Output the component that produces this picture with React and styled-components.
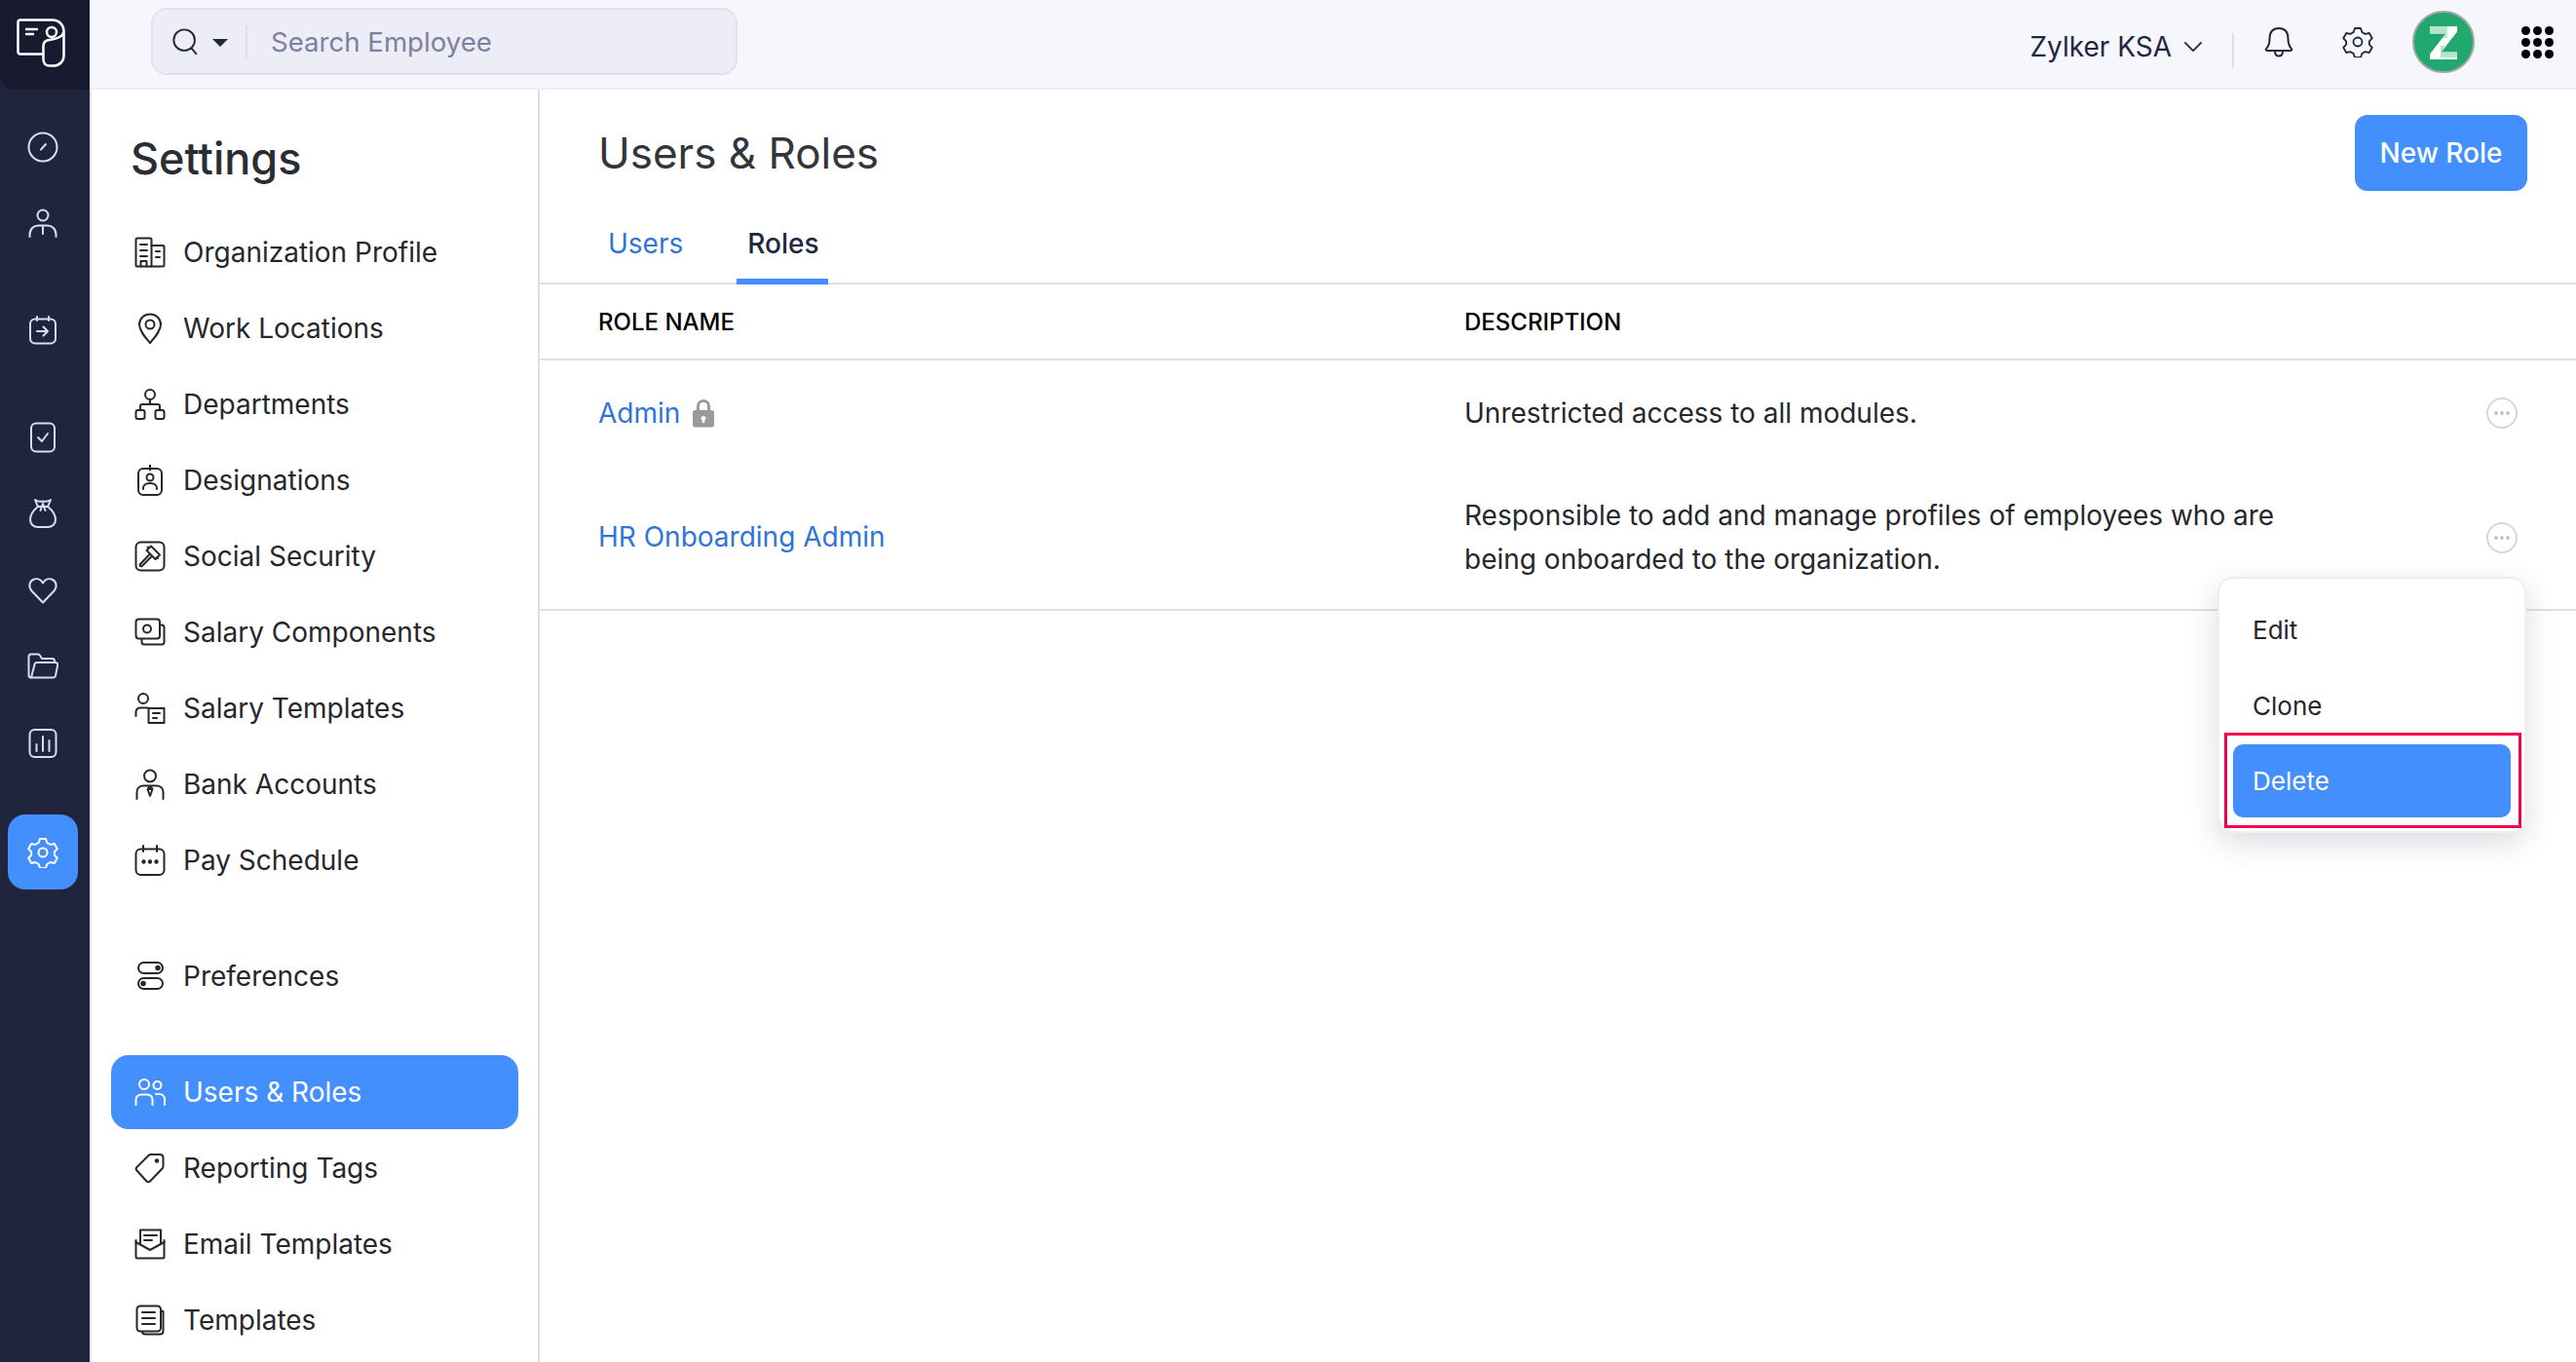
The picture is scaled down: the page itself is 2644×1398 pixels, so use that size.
import React from "react";
import styled, { createGlobalStyle } from "styled-components";

const GlobalStyle = createGlobalStyle`
  html, body {
    margin: 0;
    height: 100%;
    overflow: hidden;
    background: #fff;
  }
  body {
    font-family: Inter, "Liberation Sans", sans-serif;
    font-size: 28px;
    color: #25272d;
  }
`;

const Shell = styled.div`
  display: flex;
  height: 1398px;
  overflow: hidden;
`;

const Rail = styled.nav`
  width: 92px;
  flex: none;
  background: #20253e;
  border-right: 2px solid #e3e3e6;
  display: flex;
  flex-direction: column;
`;

const LogoBlock = styled.div`
  height: 92px;
  background: #181b30;
  border-bottom-left-radius: 14px;
  color: #fff;
  display: flex;
  align-items: center;
  justify-content: center;
  padding: 0 8px 4px 0;
  box-sizing: border-box;
`;

const RailGroups = styled.div`
  padding-top: 20px;
  display: flex;
  flex-direction: column;
  gap: 31px;
`;

const RailGroup = styled.div`
  display: flex;
  flex-direction: column;
`;

const RailItem = styled.div`
  height: ${(p) => (p.$active ? 77 : 78.5)}px;
  width: 72px;
  margin-left: 8px;
  margin-top: ${(p) => (p.$active ? 3 : 0)}px;
  display: flex;
  align-items: center;
  justify-content: center;
  color: #d5def4;
  border-radius: 18px;
  background: ${(p) => (p.$active ? "#438ffe" : "transparent")};
  ${(p) => p.$active && "color: #fff;"}
`;

const Column = styled.div`
  flex: 1;
  min-width: 0;
  display: flex;
  flex-direction: column;
`;

const TopBar = styled.header`
  height: 92px;
  flex: none;
  box-sizing: border-box;
  background: #f6f7fd;
  border-bottom: 2px solid #eeeff2;
  margin-left: -2px;
  display: flex;
  align-items: flex-start;
  padding: 8px 24px 0 63px;
`;

const SearchBox = styled.div`
  width: 602px;
  height: 69px;
  box-sizing: border-box;
  background: #ecedf6;
  border: 2px solid #e0e2ef;
  border-radius: 16px;
  display: flex;
  align-items: center;
  padding-left: 19px;
  color: #23263f;
`;

const Caret = styled.span`
  width: 0;
  height: 0;
  margin-left: 12px;
  border-left: 8px solid transparent;
  border-right: 8px solid transparent;
  border-top: 8px solid #23263f;
  margin-top: 3px;
`;

const SearchDivider = styled.span`
  width: 2px;
  height: 34px;
  background: #dcdeea;
  margin: 0 24px 0 18px;
`;

const Placeholder = styled.span`
  color: #7d80a0;
  font-size: 27.6px;
`;

const TopRight = styled.div`
  margin-left: auto;
  display: flex;
  align-items: center;
  height: 70px;
`;

const Company = styled.div`
  display: flex;
  align-items: center;
  gap: 9px;
  color: #23263f;
  font-size: 28px;
  margin-top: 10px;
`;

const TopDivider = styled.span`
  width: 2px;
  height: 36px;
  background: #dcdde5;
  margin: 0 30px 0 27px;
  margin-top: 18px;
`;

const TopIcon = styled.span`
  display: flex;
  color: #23263f;
  margin-left: ${(p) => p.$left || 0}px;
`;

const Avatar = styled.div`
  width: 64px;
  height: 64px;
  margin-left: 40px;
  box-sizing: border-box;
  border-radius: 50%;
  background: #21a86e;
  border: 2px solid #a3a6a6;
  display: flex;
  align-items: center;
  justify-content: center;
`;

const AvatarLetter = styled.span`
  font-size: 47px;
  font-weight: 900;
  line-height: 1;
  color: transparent;
  background:
    linear-gradient(to right, #b5e6cb 62%, #fff 62%) 0 22% / 100% 26% no-repeat,
    linear-gradient(to right, #fff 40%, #b5e6cb 40%) 0 78% / 100% 26% no-repeat,
    #fff;
  -webkit-background-clip: text;
  background-clip: text;
`;

const AppGrid = styled.div`
  display: grid;
  grid-template-columns: repeat(3, 8px);
  grid-auto-rows: 8px;
  gap: 4px;
  margin-left: 48px;
`;

const AppDot = styled.span`
  width: 9px;
  height: 9px;
  border-radius: 50%;
  background: #000;
`;

const Body = styled.div`
  flex: 1;
  min-height: 0;
  display: flex;
`;

const SettingsPanel = styled.aside`
  width: 460px;
  flex: none;
  box-sizing: border-box;
  border-right: 2px solid #dfdfe2;
  padding: 0 20px;
  overflow: hidden;
`;

const PanelTitle = styled.h2`
  margin: 43px 0 31px 20px;
  height: 55px;
  font-size: 45px;
  line-height: 55px;
  font-weight: 500;
  color: #2b2d33;
`;

const MenuGroup = styled.div`
  margin-bottom: ${(p) => p.$after || 0}px;
`;

const MenuRow = styled.div`
  height: 76px;
  margin-bottom: 2px;
  box-sizing: border-box;
  padding-left: 24px;
  display: flex;
  align-items: center;
  gap: 18px;
  border-radius: 18px;
  font-size: 28px;
  color: ${(p) => (p.$active ? "#fff" : "#25272d")};
  background: ${(p) => (p.$active ? "#438ffe" : "transparent")};
`;

const Main = styled.main`
  flex: 1;
  min-width: 0;
  position: relative;
`;

const PageHead = styled.div`
  height: 104px;
  box-sizing: border-box;
  padding: 26px 50px 0 60px;
  display: flex;
  align-items: flex-start;
  justify-content: space-between;
`;

const PageTitle = styled.h1`
  margin: 0;
  font-size: 44px;
  line-height: 78px;
  font-weight: 400;
  color: #33353a;
`;

const PrimaryButton = styled.button`
  width: 177px;
  height: 78px;
  border: 0;
  border-radius: 13px;
  background: #438ffe;
  color: #fff;
  font-family: inherit;
  font-size: 28px;
  font-weight: 500;
`;

const Tabs = styled.div`
  height: 96px;
  box-sizing: border-box;
  border-bottom: 2px solid #dfdfe2;
  padding-left: 59px;
  display: flex;
  gap: 44px;
`;

const Tab = styled.div`
  padding: 32px ${(p) => (p.$active ? 9 : 11)}px 0 11px;
  line-height: 44px;
  margin-bottom: -2px;
  font-weight: ${(p) => (p.$active ? 500 : 400)};
  color: ${(p) => (p.$active ? "#23263f" : "#2f74d8")};
  border-bottom: 6px solid ${(p) => (p.$active ? "#438ffe" : "transparent")};
`;

const TableHead = styled.div`
  height: 78px;
  box-sizing: border-box;
  border-bottom: 2px solid #dfdfe2;
  padding-left: 60px;
  display: grid;
  grid-template-columns: 889px 1fr;
  align-items: center;
  font-size: 24px;
  font-weight: 500;
  color: #000;
`;

const TableRow = styled.div`
  box-sizing: border-box;
  padding: ${(p) => p.$pad}px 50px ${(p) => p.$pad}px 60px;
  display: grid;
  grid-template-columns: 889px 1fr 42px;
  align-items: center;
  line-height: 45px;
  ${(p) => p.$last && "border-bottom: 2px solid #dfdfe2;"}
`;

const RoleName = styled.div`
  display: flex;
  align-items: center;
  gap: 12px;
  color: #2f74d8;
`;

const LockIcon = styled.svg`
  width: 24px;
  height: 30px;
  color: #9a9a9c;
`;

const Description = styled.div`
  max-width: 860px;
  color: #25272d;
`;

const MoreButton = styled.div`
  width: 32px;
  height: 32px;
  box-sizing: border-box;
  border: 2px solid #d6d6d8;
  border-radius: 50%;
  display: flex;
  align-items: center;
  justify-content: center;
  gap: 2px;
`;

const MoreDot = styled.span`
  width: 4px;
  height: 4px;
  border-radius: 50%;
  background: #c4c4c6;
`;

const Dropdown = styled.div`
  position: absolute;
  top: 500px;
  right: 51px;
  width: 317px;
  height: 263px;
  box-sizing: border-box;
  background: #fff;
  border: 2px solid #eeeef5;
  border-radius: 16px;
  box-shadow: 0 10px 30px rgba(30, 35, 60, 0.16);
  padding: 14px 14px 0;
`;

const DropdownItem = styled.div`
  height: ${(p) => p.$height}px;
  box-sizing: border-box;
  border-radius: 10px;
  padding-left: 20px;
  display: flex;
  align-items: center;
  font-size: 26px;
  color: ${(p) => (p.$active ? "#fff" : "#25272d")};
  background: ${(p) => (p.$active ? "#438ffe" : "transparent")};
`;

const Highlight = styled.div`
  position: absolute;
  left: 5px;
  right: 3px;
  top: 158px;
  height: 98px;
  box-sizing: border-box;
  border: 3px solid #f5004f;
`;

const Glyph = styled.svg`
  width: ${(p) => p.$size || 32}px;
  height: ${(p) => p.$size || 32}px;
  flex: none;
  fill: none;
  stroke: currentColor;
  stroke-width: ${(p) => p.$stroke || 2};
  stroke-linecap: round;
  stroke-linejoin: round;
`;

const Icon = ({ size, stroke, children, box = 32 }) => (
  <Glyph $size={size} $stroke={stroke} viewBox={`0 0 ${box} ${box}`}>
    {children}
  </Glyph>
);

// left rail
const railIcons = {
  clock: (
    <>
      <circle cx="16" cy="16" r="14.5" />
      <path d="M14 18.5 19 13" />
    </>
  ),
  person: (
    <>
      <circle cx="16" cy="7" r="5.5" />
      <path d="M2.5 29v-2c0-6 4-9.5 9-9.5h9c5 0 9 3.5 9 9.5v2M16 18v8" />
    </>
  ),
  checkin: (
    <>
      <rect x="3" y="4.5" width="26" height="25" rx="5" />
      <path d="M10 2v4M22 2v4M10 17h11M16.500 12.500l4.500 4.500-4.500 4.500" />
    </>
  ),
  task: (
    <>
      <rect x="4" y="1.500" width="24" height="29" rx="5" />
      <path d="M11 16l4 4 6-8" />
    </>
  ),
  bag: (
    <>
      <path d="M11 9C6 13 3 18 3 22.500 3 27 6.500 30 11 30h10c4.500 0 8-3 8-7.500C29 18 26 13 21 9" />
      <path d="M8 2c3 2 5 2 8 1.500 3 .5 5 .5 8-1.500-1 2.500-2 5-3 7H11C10 7 9 4.500 8 2zM16 6l-2.500 7M16 6l2.500 7" />
    </>
  ),
  heart: <path d="M16 28.500 4.500 16.500C1 12.500 2 7 6 5c3.500-1.700 7.500-.7 10 3.500C18.500 4.300 22.500 3.300 26 5c4 2 5 7.500 1.500 11.500z" />,
  folder: (
    <>
      <path d="M4 27.500C2.500 27.500 1.500 26.500 1.500 25V6C1.500 4.500 2.500 3.500 4 3.500h6.500c1 0 2 .5 2.500 1.300L15 8h10.500c1.500 0 2.500 1 2.500 2.500V12" />
      <path d="M4 27.500 7.500 14c.3-1.200 1.300-2 2.500-2h19c1.500 0 2.500 1.200 2.200 2.700L29 25.500c-.3 1.200-1.300 2-2.500 2z" />
    </>
  ),
  chart: (
    <>
      <rect x="2.500" y="2" width="27" height="28" rx="5" />
      <path d="M9.500 24v-7M16 24V9M22.500 24v-11" />
    </>
  ),
  gear: (
    <>
      <path d="M13 2h6l1.300 4 3.300 1.900 4.200-.9 3 5.200-2.900 3.100v3.400l2.900 3.100-3 5.200-4.200-.9-3.300 1.900-1.300 4h-6l-1.300-4-3.300-1.900-4.200.9-3-5.200 2.900-3.100v-3.400L1.200 12.200l3-5.200 4.200.9L11.700 6z" />
      <circle cx="16" cy="16" r="4.500" />
    </>
  )
};

// settings menu
const menuIcons = {
  org: (
    <>
      <path d="M3 1.500h13c1 0 1.500.5 1.500 1.500v27.500H3c-1 0-1.500-.5-1.500-1.500V3c0-1 .5-1.500 1.500-1.500z" />
      <path d="M17.500 9H29c1 0 1.500.5 1.500 1.500V29c0 1-.5 1.500-1.500 1.500H17.500" />
      <path d="M6 8h7M6 14h7M6 20h7M22 15h4M22 21h4M6.500 30.500V25h6v5.500" />
    </>
  ),
  pin: (
    <>
      <path d="M16 31C11 25 5 18.500 5 12 5 6 10 1.500 16 1.500S27 6 27 12c0 6.500-6 13-11 19z" />
      <circle cx="16" cy="12" r="4.500" />
    </>
  ),
  dept: (
    <>
      <circle cx="16" cy="6" r="5" />
      <path d="M16 11v5M6 22v-4c0-1.200.8-2 2-2h16c1.200 0 2 .8 2 2v4" />
      <rect x="1.500" y="22" width="9" height="9" rx="2" />
      <rect x="21.500" y="22" width="9" height="9" rx="2" />
    </>
  ),
  badge: (
    <>
      <rect x="4" y="4" width="24" height="27" rx="5" />
      <path d="M16 .5v5" />
      <circle cx="16" cy="13" r="3.500" />
      <path d="M9 25v-1c0-3 3-5 7-5s7 2 7 5v1" />
    </>
  ),
  gavel: (
    <>
      <rect x="1.500" y="1.500" width="29" height="29" rx="5" />
      <path d="M12.500 10 17 5.500l9 9-4.500 4.500zM14.500 7.500l-1-1M23 17l1 1M15 14.500 6 24c-.7.8-.7 1.500 0 2s1.300.5 2-.2l9-9" />
    </>
  ),
  money: (
    <>
      <path d="M26 8.500h2c1.500 0 2.500 1 2.500 2.500v15c0 1.500-1 2.500-2.500 2.500H10c-1.500 0-2.500-1-2.500-2.500v-3" />
      <rect x="1.500" y="2.500" width="24.500" height="20" rx="3" fill="#fff" />
      <circle cx="13" cy="12.500" r="4" />
    </>
  ),
  template: (
    <>
      <circle cx="9" cy="6" r="5" />
      <path d="M1.500 24v-4c0-3 2-4.500 5-4.500h7" />
      <rect x="14.500" y="16" width="16" height="15" />
      <path d="M19 21h7M19 26h4" />
    </>
  ),
  bank: (
    <>
      <circle cx="16" cy="7.500" r="6" />
      <path d="M2.500 31v-7c0-4 3-6.500 7-6.500h13c4 0 7 2.500 7 6.500v7" />
      <path d="M16 18l-2.500 3 2.500 7 2.500-7zM13.500 21h5" />
    </>
  ),
  calendar: (
    <>
      <rect x="1.500" y="4.500" width="29" height="26.500" rx="5" />
      <path d="M9 1v6M23 1v6" />
      <circle cx="9.500" cy="17.500" r="1.200" fill="currentColor" />
      <circle cx="16" cy="17.500" r="1.200" fill="currentColor" />
      <circle cx="22.500" cy="17.500" r="1.200" fill="currentColor" />
    </>
  ),
  toggles: (
    <>
      <rect x="4" y="2" width="25" height="11" rx="5.500" />
      <rect x="4" y="18" width="25" height="11" rx="5.500" />
      <circle cx="24" cy="7.500" r="1.800" fill="currentColor" />
      <circle cx="9" cy="23.500" r="1.800" fill="currentColor" />
    </>
  ),
  users: (
    <>
      <circle cx="10" cy="8" r="5" />
      <circle cx="23.500" cy="9" r="4" />
      <path d="M1.500 29v-5c0-3.500 2.500-5.500 6-5.500h5c3.500 0 6 2 6 5.500v5M22 18h3.500c3 0 5.500 2 5.500 5.500V29" />
    </>
  ),
  tag: (
    <>
      <path d="M17 2h9c2 0 3.500 1.500 3.500 3.500v8.500c0 1-.3 1.700-1 2.500L16 29.500c-1 1-2.500 1-3.500 0L2.500 18.500c-1-1-1-2.500 0-3.500L14.500 3c.7-.7 1.500-1 2.500-1z" />
      <circle cx="23" cy="8.500" r="1.300" fill="currentColor" />
    </>
  ),
  mail: (
    <>
      <path d="M6 15V1.500h21V15" />
      <path d="M1.500 12v17c0 1 .5 1.500 1.500 1.500h26c1 0 1.500-.5 1.500-1.500V12" />
      <path d="M1.500 14 16 22l14.500-8M10 7h13M10 12h8" />
    </>
  ),
  docs: (
    <>
      <path d="M27 7h2.500v20c0 2-1.500 3.500-3.500 3.500H11c-1.500 0-3-1-3-3" />
      <rect x="2.500" y="1.500" width="24.500" height="26" rx="3.500" fill="#fff" />
      <path d="M8 8h13M8 14h13M8 20h13" />
    </>
  )
};

const railGroups = [
  [{ icon: "clock" }, { icon: "person" }],
  [{ icon: "checkin" }],
  [{ icon: "task" }, { icon: "bag" }, { icon: "heart" }, { icon: "folder" }, { icon: "chart" }],
  [{ icon: "gear", active: true }]
];

const menuGroups = [
  [
    ["org", "Organization Profile"],
    ["pin", "Work Locations"],
    ["dept", "Departments"],
    ["badge", "Designations"],
    ["gavel", "Social Security"],
    ["money", "Salary Components"],
    ["template", "Salary Templates"],
    ["bank", "Bank Accounts"],
    ["calendar", "Pay Schedule"]
  ],
  [["toggles", "Preferences"]],
  [
    ["users", "Users & Roles", true],
    ["tag", "Reporting Tags"],
    ["mail", "Email Templates"],
    ["docs", "Templates"]
  ]
];

const App = () => {
  return (
    <Shell>
      <GlobalStyle />
      <Rail>
        <LogoBlock>
          <Icon size={50} stroke={2.5} box={50}>
            <path d="M27 36.500H4c-1.500 0-2.500-1-2.500-2.500V4c0-1.500 1-2.500 2.500-2.500h33c6.500 0 11.500 5 11.500 11.500v25c0 6-4.500 10.500-10.500 10.500h-4c-4 0-6.500-2.500-6.500-6.500V28c0-3.500 2.500-5.500 6-6 8.500-1 14.500-3 15-9" />
            <path d="M10 11h11M10 16h7" />
            <circle cx="36" cy="14" r="5" />
          </Icon>
        </LogoBlock>
        <RailGroups>
          {railGroups.map((group, i) => (
            <RailGroup key={i}>
              {group.map((item) => (
                <RailItem key={item.icon} $active={item.active}>
                  <Icon size={32}>{railIcons[item.icon]}</Icon>
                </RailItem>
              ))}
            </RailGroup>
          ))}
        </RailGroups>
      </Rail>
      <Column>
        <TopBar>
          <SearchBox>
            <Icon size={30} stroke={2}>
              <circle cx="14" cy="14" r="11.500" />
              <path d="M22 23l5 6" />
            </Icon>
            <Caret />
            <SearchDivider />
            <Placeholder>Search Employee</Placeholder>
          </SearchBox>
          <TopRight>
            <Company>
              Zylker KSA
              <Icon size={26} stroke={2.2}>
                <path d="M6 11l10 10 10-10" />
              </Icon>
            </Company>
            <TopDivider />
            <TopIcon>
              <Icon size={32}>
                <path d="M3 23c3-3 3.500-5 3.500-10C6.500 6 10 2 16 2s9.500 4 9.500 11c0 5 .5 7 3.500 10 .8 1 .2 2-1 2H4c-1.200 0-1.800-1-1-2z" />
                <path d="M12 25.500c0 3 1.500 5 4 5s4-2 4-5" />
              </Icon>
            </TopIcon>
            <TopIcon $left={49}>
              <Icon size={32} stroke={1.8}>{railIcons.gear}</Icon>
            </TopIcon>
            <Avatar>
              <AvatarLetter>Z</AvatarLetter>
            </Avatar>
            <AppGrid>
              {Array.from({ length: 9 }, (_, i) => (
                <AppDot key={i} />
              ))}
            </AppGrid>
          </TopRight>
        </TopBar>
        <Body>
          <SettingsPanel>
            <PanelTitle>Settings</PanelTitle>
            {menuGroups.map((group, i) => (
              <MenuGroup key={i} $after={i < 2 ? 43 : 0}>
                {group.map(([icon, label, active]) => (
                  <MenuRow key={label} $active={active}>
                    <Icon size={32}>{menuIcons[icon]}</Icon>
                    {label}
                  </MenuRow>
                ))}
              </MenuGroup>
            ))}
          </SettingsPanel>
          <Main>
            <PageHead>
              <PageTitle>Users &amp; Roles</PageTitle>
              <PrimaryButton>New Role</PrimaryButton>
            </PageHead>
            <Tabs>
              <Tab>Users</Tab>
              <Tab $active>Roles</Tab>
            </Tabs>
            <TableHead>
              <span>ROLE NAME</span>
              <span>DESCRIPTION</span>
            </TableHead>
            <TableRow $pad={31.5}>
              <RoleName>
                Admin
                <LockIcon viewBox="0 0 24 30">
                  <path
                    fill="currentColor"
                    fillRule="evenodd"
                    d="M5 12V8a7 7 0 0 1 14 0v4h1.500c1.500 0 2.500 1 2.500 2.500V27c0 1.500-1 2.500-2.500 2.500h-17C2 29.500 1 28.500 1 27V14.500C1 13 2 12 3.500 12zM8 12h8V8a4 4 0 0 0-8 0zM12 18a2.500 2.500 0 0 0-1.300 4.600V25h2.600v-2.400A2.500 2.500 0 0 0 12 18z"
                  />
                </LockIcon>
              </RoleName>
              <Description>Unrestricted access to all modules.</Description>
              <MoreButton>
                <MoreDot />
                <MoreDot />
                <MoreDot />
              </MoreButton>
            </TableRow>
            <TableRow $pad={28.5} $last>
              <RoleName>HR Onboarding Admin</RoleName>
              <Description>
                Responsible to add and manage profiles of employees who are being onboarded to the organization.
              </Description>
              <MoreButton>
                <MoreDot />
                <MoreDot />
                <MoreDot />
              </MoreButton>
            </TableRow>
            <Dropdown>
              <DropdownItem $height={77}>Edit</DropdownItem>
              <DropdownItem $height={79}>Clone</DropdownItem>
              <DropdownItem $height={75} $active>Delete</DropdownItem>
              <Highlight />
            </Dropdown>
          </Main>
        </Body>
      </Column>
    </Shell>
  );
};

export default App;
